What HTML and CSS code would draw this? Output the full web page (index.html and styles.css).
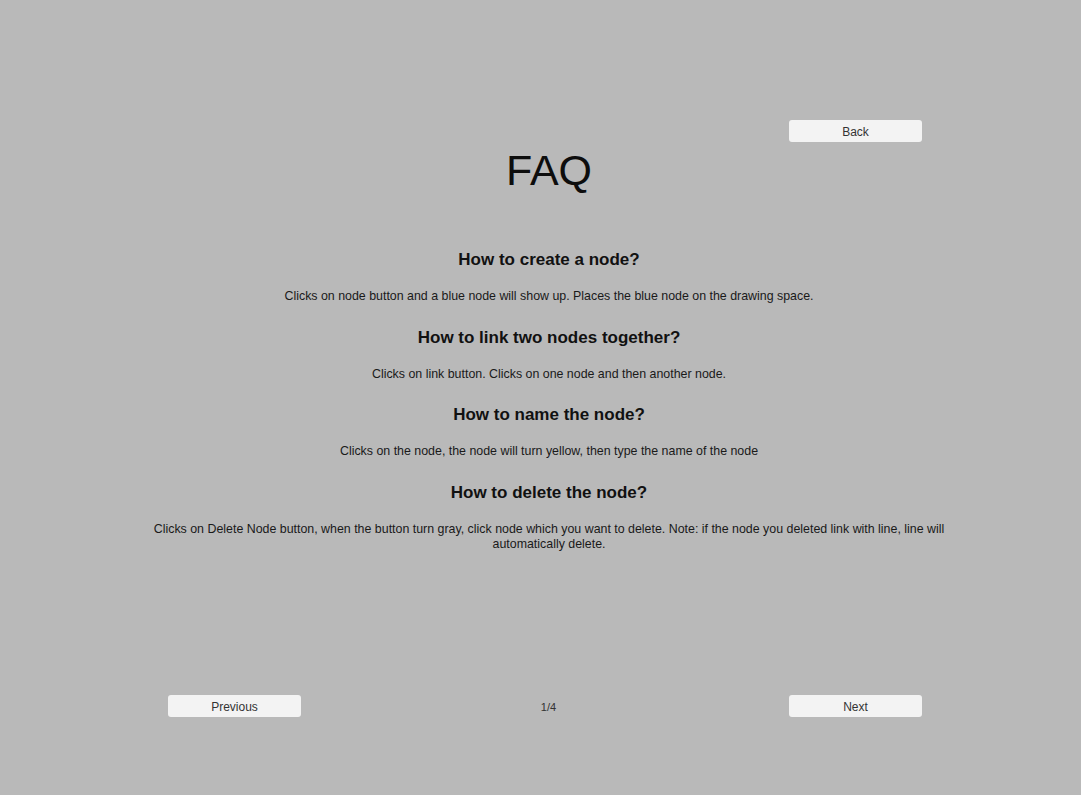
FILE: index.html
```html
<!DOCTYPE html>
<html>
<head>
<meta charset="utf-8">
<link rel="stylesheet" href="styles.css">
</head>
<body>
<div class="page">
  <div class="top-bar">
    <button class="btn">Back</button>
  </div>
  <h1 class="title">FAQ</h1>
  <div class="faq">
    <section class="item">
      <h2 class="q">How to create a node?</h2>
      <p class="a">Clicks on node button and a blue node will show up. Places the blue node on the drawing space.</p>
    </section>
    <section class="item">
      <h2 class="q">How to link two nodes together?</h2>
      <p class="a">Clicks on link button. Clicks on one node and then another node.</p>
    </section>
    <section class="item">
      <h2 class="q">How to name the node?</h2>
      <p class="a">Clicks on the node, the node will turn yellow, then type the name of the node</p>
    </section>
    <section class="item">
      <h2 class="q">How to delete the node?</h2>
      <p class="a">Clicks on Delete Node button, when the button turn gray, click node which you want to delete. Note: if the node you deleted link with line, line will automatically delete.</p>
    </section>
  </div>
  <div class="footer">
    <button class="btn">Previous</button>
    <span class="pager">1/4</span>
    <button class="btn">Next</button>
  </div>
</div>
</body>
</html>
```

FILE: styles.css
```css
html, body {
  margin: 0;
  padding: 0;
}
body {
  background: #b9b9b9;
  font-family: "Liberation Sans", Arial, sans-serif;
  color: #111;
}
.page {
  width: 1081px;
  height: 795px;
  display: flex;
  flex-direction: column;
  box-sizing: border-box;
  padding-top: 120px;
  padding-bottom: 78px;
  overflow: hidden;
}
.top-bar {
  display: flex;
  justify-content: flex-end;
  padding-right: 159px;
}
.btn {
  width: 133px;
  height: 22px;
  padding: 0;
  margin: 0;
  border: none;
  border-radius: 3px;
  background: #f3f3f3;
  color: #333;
  font-family: "Liberation Sans", Arial, sans-serif;
  font-size: 12px;
  line-height: 22px;
  padding-top: 1px;
  box-sizing: border-box;
}
.title {
  margin: 4px 0 0 149px;
  width: 800px;
  text-align: center;
  font-size: 43px;
  font-weight: normal;
  line-height: 48px;
  color: #0d0d0d;
}
.faq {
  margin: 56px 0 0 149px;
  width: 800px;
  display: flex;
  flex-direction: column;
  gap: 23.7px;
  text-align: center;
}
.item {
  display: flex;
  flex-direction: column;
  gap: 19px;
}
.q {
  margin: 0;
  font-size: 17px;
  line-height: 20px;
  font-weight: bold;
  color: #111;
}
.a {
  margin: 0;
  font-size: 12.4px;
  line-height: 15px;
  color: #1a1a1a;
}
.footer {
  margin-top: auto;
  display: grid;
  grid-template-columns: 133px 1fr 133px;
  align-items: center;
  padding: 0 159px 0 168px;
}
.pager {
  text-align: center;
  font-size: 11px;
  color: #333;
  padding-left: 7px;
  padding-top: 1px;
}
```
